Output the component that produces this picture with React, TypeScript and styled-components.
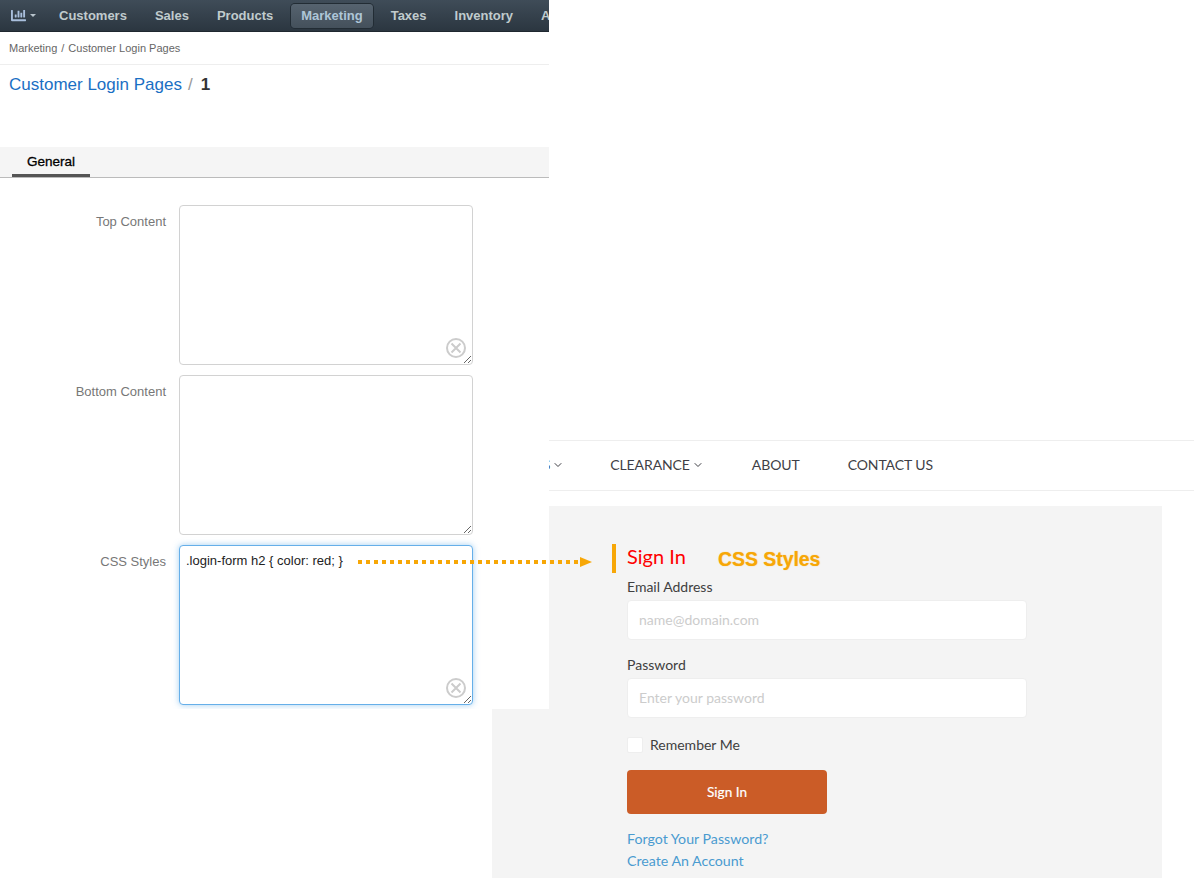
import { createGlobalStyle, styled } from "styled-components";
import { ChevronDown } from "lucide-react";
import { FaChartBar } from "react-icons/fa";

const GlobalStyle = createGlobalStyle`
  html, body {
    margin: 0;
    background: #fff;
  }
`;

const Page = styled.div`
  position: relative;
  display: grid;
  width: 1194px;
  height: 878px;
  overflow: hidden;
`;

/* left screenshot, the admin page */
const AdminPane = styled.div`
  grid-area: 1 / 1;
  z-index: 1;
  width: 549px;
  height: 709px;
  overflow: hidden;
  background: #fff;
  font-family: "Liberation Sans", Arial, sans-serif;
`;

const TopNav = styled.nav`
  display: flex;
  align-items: center;
  gap: 8px;
  height: 31px;
  padding-left: 11px;
  background: linear-gradient(#3f4c58, #2b3640);
  border-bottom: 1px solid #1f2830;
  white-space: nowrap;
`;

const ChartMenu = styled.span`
  display: flex;
  flex-shrink: 0;
  align-items: center;
  gap: 4px;
  width: 30px;
  color: #a9bfdc;
  font-size: 15px;
`;

const Caret = styled.i`
  width: 0;
  height: 0;
  border-left: 3.5px solid transparent;
  border-right: 3.5px solid transparent;
  border-top: 3.5px solid #b8c4cc;
`;

const NavItem = styled.a<{ $active?: boolean }>`
  display: flex;
  flex-shrink: 0;
  align-items: center;
  height: 24px;
  padding: 0 10px;
  border-radius: 4px;
  font-size: 13px;
  font-weight: bold;
  color: ${(p) => (p.$active ? "#aec6d8" : "#c0cbcd")};
  background: ${(p) => (p.$active ? "linear-gradient(#56636f, #44505b)" : "transparent")};
  box-shadow: ${(p) => (p.$active ? "0 0 0 1px #222c34" : "none")};
`;

const Breadcrumb = styled.div`
  display: flex;
  align-items: center;
  gap: 4px;
  height: 32px;
  padding-left: 9px;
  border-bottom: 1px solid #eee;
  font-size: 11px;
  color: #666;
`;

const TitleRow = styled.h1`
  display: flex;
  gap: 6px;
  height: 82px;
  margin: 0;
  padding: 10px 0 0 9px;
  box-sizing: border-box;
  font-size: 17px;
  line-height: 20px;
  font-weight: normal;
  color: #999;
`;

const TitleLink = styled.a`
  color: #1a6fc4;
`;

const TitleId = styled.b`
  margin-left: 2px;
  color: #333;
`;

const TabBar = styled.div`
  display: flex;
  height: 30px;
  padding-left: 12px;
  background: #f5f5f5;
  border-bottom: 1px solid #bbb;
`;

const Tab = styled.a`
  width: 78px;
  box-sizing: border-box;
  padding-top: 7px;
  border-bottom: 3px solid #555;
  text-align: center;
  font-size: 13.5px;
  color: #000;
  -webkit-text-stroke: 0.3px #000;
`;

const Form = styled.div`
  display: flex;
  flex-direction: column;
  gap: 10px;
  padding-top: 27px;
`;

const FormRow = styled.div`
  display: grid;
  grid-template-columns: 166px 294px;
  column-gap: 13px;
`;

const RowLabel = styled.label`
  padding-top: 9px;
  text-align: right;
  font-size: 13px;
  line-height: 15px;
  color: #777;
`;

const EditorBox = styled.div`
  position: relative;
  height: 160px;
`;

const Editor = styled.textarea<{ $focused?: boolean }>`
  display: block;
  width: 100%;
  height: 100%;
  box-sizing: border-box;
  padding: 6px;
  resize: vertical;
  outline: none;
  border-radius: 4px;
  border: 1px solid ${(p) => (p.$focused ? "#66afe9" : "#d2d2d2")};
  box-shadow: ${(p) => (p.$focused ? "0 0 6px rgba(102, 175, 233, 0.6)" : "none")};
  font-family: "Liberation Sans", Arial, sans-serif;
  font-size: 13px;
  line-height: 17px;
  color: #222;
`;

const ClearSvg = styled.svg`
  position: absolute;
  right: 6px;
  bottom: 6px;
`;

function ClearIcon() {
  return (
    <ClearSvg width="22" height="22" viewBox="0 0 22 22" fill="none" stroke="#ccc" strokeWidth="2">
      <circle cx="11" cy="11" r="9" />
      <path d="M6.5 6.5 L15.5 15.5 M15.5 6.5 L6.5 15.5" />
    </ClearSvg>
  );
}

/* right screenshot, the storefront sign in page */
const StorePane = styled.div`
  grid-area: 1 / 1;
  display: flex;
  flex-direction: column;
  padding: 440px 0 0 492px;
  font-family: Lato, sans-serif;
`;

const StoreNav = styled.nav`
  display: flex;
  align-items: center;
  gap: 48px;
  height: 47px;
  padding: 0 0 2px 19px;
  border-top: 1px solid #eee;
  border-bottom: 1px solid #eee;
  font-size: 14px;
  letter-spacing: -0.1px;
  color: #3f3f46;
`;

const StoreNavItem = styled.a`
  display: flex;
  align-items: center;
  gap: 2px;

  &:first-child {
    margin-right: -2px;
  }
`;

const LoginPanel = styled.div`
  display: flex;
  flex-direction: column;
  width: 670px;
  flex: 1;
  box-sizing: border-box;
  margin-top: 15px;
  padding: 38px 0 0 135px;
  background: #f4f4f4;
`;

const Heading = styled.h2`
  position: relative;
  height: 29px;
  margin: 0 0 2px;
  font-size: 20px;
  line-height: 25px;
  font-weight: normal;
  color: #f00;

  &::before {
    content: "";
    position: absolute;
    left: -15px;
    top: 0;
    width: 4px;
    height: 29px;
    background: #f7a707;
  }
`;

const Field = styled.div`
  display: flex;
  flex-direction: column;
  gap: 1px;
  margin-bottom: 13px;
`;

const FieldLabel = styled.label`
  font-size: 14px;
  line-height: 24px;
  color: #404040;
`;

const TextInput = styled.input`
  width: 400px;
  height: 40px;
  box-sizing: border-box;
  padding: 0 11px 2px;
  border: 1px solid #eee;
  border-radius: 4px;
  background: #fff;
  font-family: Lato, sans-serif;
  font-size: 14px;

  &::placeholder {
    color: #ccc;
    opacity: 1;
  }
`;

const RememberRow = styled.div`
  display: flex;
  gap: 7px;
  height: 16px;
  margin-top: 6px;
  font-size: 14px;
  line-height: 15px;
  color: #404040;
`;

const CheckBox = styled.span`
  width: 16px;
  height: 16px;
  box-sizing: border-box;
  border: 1px solid #eee;
  border-radius: 2px;
  background: #fff;
`;

const SignInButton = styled.button`
  width: 200px;
  height: 44px;
  margin: 17px 0 14px;
  padding-bottom: 2px;
  border: none;
  border-radius: 4px;
  background: #cb5c27;
  color: #fff;
  font-family: Lato, sans-serif;
  font-size: 13.6px;
  -webkit-text-stroke: 0.2px #fff;
`;

const TextLink = styled.a`
  font-size: 14.2px;
  line-height: 22px;
  color: #4a9bd0;
`;

/* annotation drawn over both screenshots */
const Callout = styled.span`
  position: absolute;
  z-index: 2;
  left: 718px;
  top: 547px;
  font-family: "Liberation Sans", Arial, sans-serif;
  font-size: 19.4px;
  line-height: 24px;
  font-weight: bold;
  color: #f7a707;
  text-shadow: 0 0 1px rgba(247, 167, 7, 0.7);
`;

const ArrowSvg = styled.svg`
  position: absolute;
  z-index: 2;
  left: 358px;
  top: 556px;
`;

function App() {
  return (
    <Page>
      <GlobalStyle />
      <AdminPane>
        <TopNav>
          <ChartMenu>
            <FaChartBar />
            <Caret />
          </ChartMenu>
          <NavItem>Customers</NavItem>
          <NavItem>Sales</NavItem>
          <NavItem>Products</NavItem>
          <NavItem $active>Marketing</NavItem>
          <NavItem>Taxes</NavItem>
          <NavItem>Inventory</NavItem>
          <NavItem>Administration</NavItem>
        </TopNav>
        <Breadcrumb>
          <span>Marketing</span>
          <span>/</span>
          <span>Customer Login Pages</span>
        </Breadcrumb>
        <TitleRow>
          <TitleLink>Customer Login Pages</TitleLink>
          <span>/</span>
          <TitleId>1</TitleId>
        </TitleRow>
        <TabBar>
          <Tab>General</Tab>
        </TabBar>
        <Form>
          <FormRow>
            <RowLabel>Top Content</RowLabel>
            <EditorBox>
              <Editor readOnly />
              <ClearIcon />
            </EditorBox>
          </FormRow>
          <FormRow>
            <RowLabel>Bottom Content</RowLabel>
            <EditorBox>
              <Editor readOnly />
            </EditorBox>
          </FormRow>
          <FormRow>
            <RowLabel>CSS Styles</RowLabel>
            <EditorBox>
              <Editor $focused readOnly defaultValue=".login-form h2 { color: red; }" />
              <ClearIcon />
            </EditorBox>
          </FormRow>
        </Form>
      </AdminPane>

      <StorePane>
        <StoreNav>
          <StoreNavItem>
            SALES <ChevronDown size={12} />
          </StoreNavItem>
          <StoreNavItem>
            CLEARANCE <ChevronDown size={12} />
          </StoreNavItem>
          <StoreNavItem>ABOUT</StoreNavItem>
          <StoreNavItem>CONTACT US</StoreNavItem>
        </StoreNav>
        <LoginPanel>
          <Heading>Sign In</Heading>
          <Field>
            <FieldLabel>Email Address</FieldLabel>
            <TextInput placeholder="name@domain.com" />
          </Field>
          <Field>
            <FieldLabel>Password</FieldLabel>
            <TextInput placeholder="Enter your password" />
          </Field>
          <RememberRow>
            <CheckBox />
            Remember Me
          </RememberRow>
          <SignInButton>Sign In</SignInButton>
          <TextLink>Forgot Your Password?</TextLink>
          <TextLink>Create An Account</TextLink>
        </LoginPanel>
      </StorePane>

      <Callout>CSS Styles</Callout>
      <ArrowSvg width="236" height="12" viewBox="0 0 236 12">
        <line x1="0" y1="6" x2="222" y2="6" stroke="#f7a707" strokeWidth="4" strokeDasharray="4 4" />
        <path d="M222 1 L234 6 L222 11 Z" fill="#f7a707" />
      </ArrowSvg>
    </Page>
  );
}

export default App;
